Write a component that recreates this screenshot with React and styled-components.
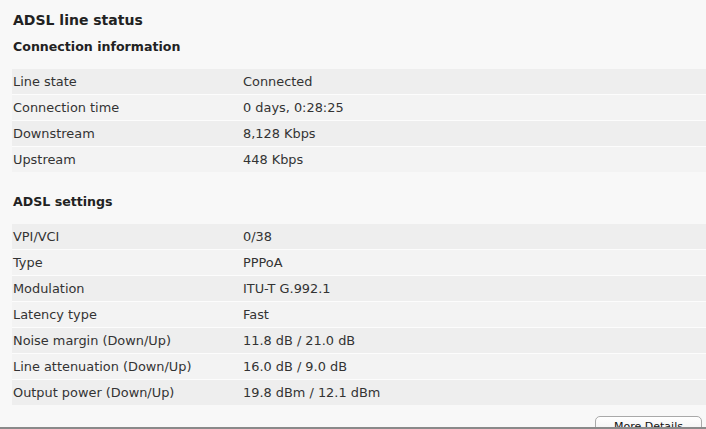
import React from 'react';
import styled, { createGlobalStyle } from 'styled-components';

const GlobalStyle = createGlobalStyle`
  html, body {
    margin: 0;
    padding: 0;
    background: #f8f8f8;
  }
  body {
    font-family: "DejaVu Sans", Verdana, sans-serif;
    color: #333;
  }
`;

const Frame = styled.div`
  height: 427px;
  overflow: hidden;
  border-bottom: 2px solid #8a8a8a;
  background: #f8f8f8;
  display: flex;
  flex-direction: column;
`;
Frame.displayName = 'Frame';

const Title = styled.h1`
  margin: 11px 0 0 13px;
  font-size: 14px;
  line-height: 18px;
  font-weight: bold;
  color: #222;
`;
Title.displayName = 'Title';

const SectionTitle = styled.h2`
  margin: ${(p) => p.top}px 0 14px 13px;
  font-size: 12.6px;
  line-height: 16px;
  font-weight: bold;
  color: #222;
`;
SectionTitle.displayName = 'SectionTitle';

const StatusTable = styled.div`
  margin-left: 12px;
  display: grid;
  grid-template-columns: 229px 1fr;
  row-gap: 1px;
  background: #fcfcfc;
`;
StatusTable.displayName = 'StatusTable';

const Cell = styled.div`
  height: 25px;
  box-sizing: border-box;
  padding-top: 1px;
  line-height: 24px;
  font-size: 12.9px;
  padding-left: ${(p) => (p.value ? 2 : 1)}px;
  white-space: nowrap;
  background: ${(p) => (p.odd ? '#eeeeee' : '#f3f3f3')};
`;
Cell.displayName = 'Cell';

const ButtonRow = styled.div`
  display: flex;
  justify-content: flex-end;
  padding: 11px 4px 0 0;
`;

const MoreButton = styled.button`
  width: 107px;
  height: 22px;
  padding: 0;
  border: 1px solid #a9a9a9;
  border-radius: 5px;
  background: linear-gradient(#ffffff, #ececec);
  font-family: "DejaVu Sans", Verdana, sans-serif;
  font-size: 11px;
  line-height: 20px;
  color: #111;
`;
MoreButton.displayName = 'MoreButton';

const connection = [
  ['Line state', 'Connected'],
  ['Connection time', '0 days, 0:28:25'],
  ['Downstream', '8,128 Kbps'],
  ['Upstream', '448 Kbps'],
];

const settings = [
  ['VPI/VCI', '0/38'],
  ['Type', 'PPPoA'],
  ['Modulation', 'ITU-T G.992.1'],
  ['Latency type', 'Fast'],
  ['Noise margin (Down/Up)', '11.8 dB / 21.0 dB'],
  ['Line attenuation (Down/Up)', '16.0 dB / 9.0 dB'],
  ['Output power (Down/Up)', '19.8 dBm / 12.1 dBm'],
];

function Rows({ data }) {
  return (
    <StatusTable>
      {data.map(([label, value], i) => (
        <React.Fragment key={label}>
          <Cell odd={i % 2 === 0}>{label}</Cell>
          <Cell odd={i % 2 === 0} value>{value}</Cell>
        </React.Fragment>
      ))}
    </StatusTable>
  );
}

export default function App() {
  return (
    <Frame>
      <GlobalStyle />
      <Title>ADSL line status</Title>
      <SectionTitle top={10}>Connection information</SectionTitle>
      <Rows data={connection} />
      <SectionTitle top={22}>ADSL settings</SectionTitle>
      <Rows data={settings} />
      <ButtonRow>
        <MoreButton>More Details</MoreButton>
      </ButtonRow>
    </Frame>
  );
}
